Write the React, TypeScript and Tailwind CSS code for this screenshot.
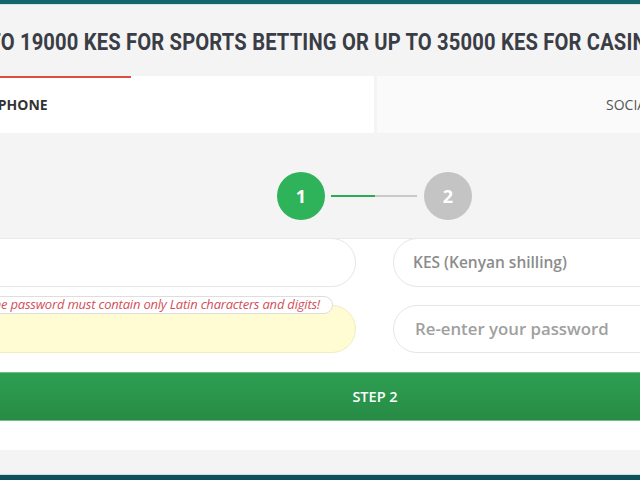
import React from "react";

export default function App() {
  return (
    <div
      className="w-[640px] h-[480px] overflow-hidden flex flex-col bg-[#f4f4f4]"
      style={{ fontFamily: '"Open Sans", "Liberation Sans", sans-serif' }}
    >
      {/* top bar */}
      <div className="h-[4px] shrink-0 bg-[#13666a]" />
      <div className="h-px shrink-0 bg-[#d4e6e7]" />

      {/* title */}
      <div className="h-[71px] shrink-0 flex items-center pt-[3px] overflow-hidden whitespace-nowrap">
        <span
          className="inline-block ml-[-43px] origin-left scale-x-[0.84] text-[24px] font-bold text-[#3a3d45] tracking-[0.2px]"
          style={{ fontFamily: 'Roboto, "Liberation Sans", sans-serif' }}
        >
          UP TO 19000 KES FOR SPORTS BETTING OR UP TO 35000 KES FOR CASINO
        </span>
      </div>

      {/* tabs */}
      <div className="h-[57px] shrink-0 flex gap-[3px]">
        <div className="relative w-[374px] shrink-0 bg-white flex items-center whitespace-nowrap overflow-hidden">
          <div className="absolute top-0 left-0 w-[131px] h-[2px] bg-[#dc4d43]" />
          <span className="ml-[-24px] text-[14px] font-bold text-[#333]">BY PHONE</span>
        </div>
        <div className="flex-1 bg-[#fafafa] flex items-center pl-[229px] whitespace-nowrap overflow-hidden">
          <span className="text-[14px] text-[#555]">SOCIAL NETWORKS</span>
        </div>
      </div>

      {/* stepper */}
      <div className="h-[105px] shrink-0 flex items-start pt-[39px] pl-[277px]">
        <div className="w-[48px] h-[48px] rounded-full bg-[#2eb25a] flex items-center justify-center text-white text-[18px] font-bold">
          1
        </div>
        <div className="ml-[6px] mt-[23px] flex h-[2px] w-[86px]">
          <div className="w-[44px] h-full bg-[#2eaa57]" />
          <div className="flex-1 h-full bg-[#c9c9c9]" />
        </div>
        <div className="ml-[7px] w-[48px] h-[48px] rounded-full bg-[#c4c4c4] flex items-center justify-center text-white text-[18px] font-bold">
          2
        </div>
      </div>

      {/* form */}
      <div className="h-[212px] shrink-0 bg-white border-t border-[#e9e9e9] overflow-hidden">
        <div className="ml-[-40px] w-[830px] flex flex-col mt-[-1px]">
          <div className="flex gap-[37px]">
            <div className="w-[396px] shrink-0 flex flex-col gap-[18px]">
              <div className="h-[49px] rounded-full bg-white border border-[#e6e6e6]" />
              <div className="relative h-[48px] rounded-full bg-[#fffbd2] border border-[#f1edc2]">
                <div className="absolute right-[22px] top-[-10px] h-[18px] pl-[10px] pr-[12px] rounded-full bg-white border border-[#dedede] flex items-center whitespace-nowrap">
                  <span className="text-[13px] italic tracking-[-0.2px] text-[#d2505a] mt-[-1px]">
                    The password must contain only Latin characters and digits!
                  </span>
                </div>
              </div>
            </div>
            <div className="flex-1 flex flex-col gap-[18px]">
              <div className="h-[49px] rounded-full bg-white border border-[#e6e6e6] flex items-center pl-[19px]">
                <span className="text-[15.5px] font-semibold text-[#8c8c8c]">KES (Kenyan shilling)</span>
              </div>
              <div className="h-[48px] rounded-full bg-white border border-[#e6e6e6] flex items-center pl-[21px]">
                <span className="text-[16.8px] font-semibold text-[#a0a0a0]">Re-enter your password</span>
              </div>
            </div>
          </div>
          <div className="mt-[19px] h-[49px] bg-gradient-to-b from-[#2ea052] to-[#278b45] border-y border-[#6fbf86] flex items-center justify-center">
            <span className="text-[14.5px] font-semibold text-white">STEP 2</span>
          </div>
        </div>
      </div>

      {/* bottom */}
      <div className="h-[24px] shrink-0 bg-[#f4f4f4]" />
      <div className="h-px shrink-0 bg-[#c9dfe0]" />
      <div className="flex-1 bg-[#0f5159]" />
    </div>
  );
}
